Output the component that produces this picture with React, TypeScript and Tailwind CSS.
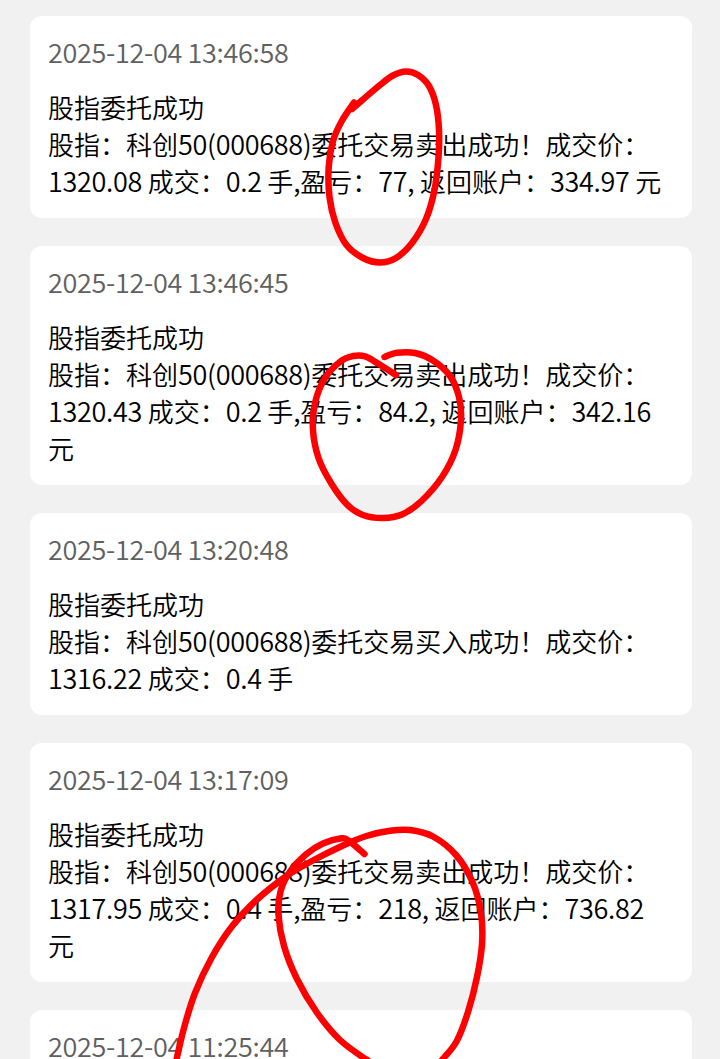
interface Message {
  time: string;
  title: string;
  content: string;
}

type Point = [number, number];

const messages: Message[] = [
  {
    time: '2025-12-04 13:46:58',
    title: '股指委托成功',
    content: '股指：科创50(000688)委托交易卖出成功！成交价：1320.08 成交：0.2 手,盈亏：77, 返回账户：334.97 元',
  },
  {
    time: '2025-12-04 13:46:45',
    title: '股指委托成功',
    content: '股指：科创50(000688)委托交易卖出成功！成交价：1320.43 成交：0.2 手,盈亏：84.2, 返回账户：342.16 元',
  },
  {
    time: '2025-12-04 13:20:48',
    title: '股指委托成功',
    content: '股指：科创50(000688)委托交易买入成功！成交价：1316.22 成交：0.4 手',
  },
  {
    time: '2025-12-04 13:17:09',
    title: '股指委托成功',
    content: '股指：科创50(000688)委托交易卖出成功！成交价：1317.95 成交：0.4 手,盈亏：218, 返回账户：736.82 元',
  },
  {
    time: '2025-12-04 11:25:44',
    title: '',
    content: '',
  },
];

// Freehand pen strokes drawn over the list
const strokes: Point[][] = [
  [
    [352, 109], [363, 99.5], [380, 85], [393, 75.5], [406, 71.5], [418, 75], [429, 86], [436, 105],
    [439, 130], [438.5, 157], [434.5, 190], [426, 219], [412, 243], [396, 258], [380, 262.5],
    [363, 258], [346.5, 245], [335.5, 223], [329.5, 197], [328.7, 167], [333, 141], [341.5, 121.5],
    [354, 102.5],
  ],
  [
    [384.5, 357], [397, 352.8], [415, 353], [433, 360.5], [450, 376], [459, 397], [461, 420],
    [455.5, 450], [442, 477], [421.5, 501], [402, 514.5], [383, 518], [363, 515], [347, 504.5],
    [331, 483], [318.5, 458], [313, 430], [315, 403], [325, 378], [341, 361], [353, 356],
    [365, 356.3], [378, 363.5], [396, 375],
  ],
  [
    [364.5, 854], [348.5, 840.5], [341.5, 838.3], [323, 843.5], [306.5, 854], [290, 871.5],
    [280.5, 891.5], [278.5, 915], [284, 946], [297, 979], [316.5, 1012], [340, 1040],
    [367, 1060], [376, 1065],
  ],
  [
    [175.5, 1064], [184, 1028], [195, 993], [211.5, 958], [231.5, 927], [256.5, 900],
    [286.5, 876], [310, 862], [343, 845.5], [366.5, 836], [390, 830.8], [410, 830],
    [433, 836.5], [456, 855], [472.5, 882], [481, 913], [482, 944], [477, 977],
    [468, 1012], [456.5, 1041.5], [442, 1060], [437, 1065],
  ],
];

// Catmull-Rom spline through the points, as cubic curves
function smoothPath(points: Point[]) {
  let d = `M${points[0][0]} ${points[0][1]}`;
  for (let i = 0; i < points.length - 1; i++) {
    const p0 = points[i - 1] ?? points[i];
    const p1 = points[i];
    const p2 = points[i + 1];
    const p3 = points[i + 2] ?? p2;
    d += ` C${p1[0] + (p2[0] - p0[0]) / 6} ${p1[1] + (p2[1] - p0[1]) / 6}`;
    d += ` ${p2[0] - (p3[0] - p1[0]) / 6} ${p2[1] - (p3[1] - p1[1]) / 6}`;
    d += ` ${p2[0]} ${p2[1]}`;
  }
  return d;
}

// Digits and latin punctuation are set slightly larger and tighter than the Chinese text
function MixedText({ text }: { text: string }) {
  return text.split(/([\x20-\x7e]+)/).map((part, i) =>
    i % 2 === 1 ? (
      <span key={i} className="text-[27px] leading-none tracking-[-0.32px]">
        {part}
      </span>
    ) : (
      part
    )
  );
}

function MessageCard({ message }: { message: Message }) {
  return (
    <div className="min-h-[202px] shrink-0 rounded-xl bg-white px-[18px] pt-[17px] pb-[19px]">
      <div className="text-[#606060]">
        <MixedText text={message.time} />
      </div>
      <div className="mt-[18px] text-black">
        <div>{message.title}</div>
        <p>
          <MixedText text={message.content} />
        </p>
      </div>
    </div>
  );
}

export default function App() {
  return (
    <div className="relative h-[1059px] w-[720px] overflow-hidden bg-[#f1f1f1] font-['Noto_Sans_CJK_SC',sans-serif] text-[26px] leading-[37px] font-[350]">
      <div className="flex flex-col gap-7 pt-4 pr-7 pl-[30px]">
        {messages.map((message) => (
          <MessageCard key={message.time} message={message} />
        ))}
      </div>

      <svg
        className="pointer-events-none absolute inset-0"
        width="720"
        height="1059"
        viewBox="0 0 720 1059"
        fill="none"
        stroke="#fe0000"
        strokeWidth="6.5"
        strokeLinecap="round"
        strokeLinejoin="round"
      >
        {strokes.map((points, i) => (
          <path key={i} d={smoothPath(points)} />
        ))}
      </svg>
    </div>
  );
}
